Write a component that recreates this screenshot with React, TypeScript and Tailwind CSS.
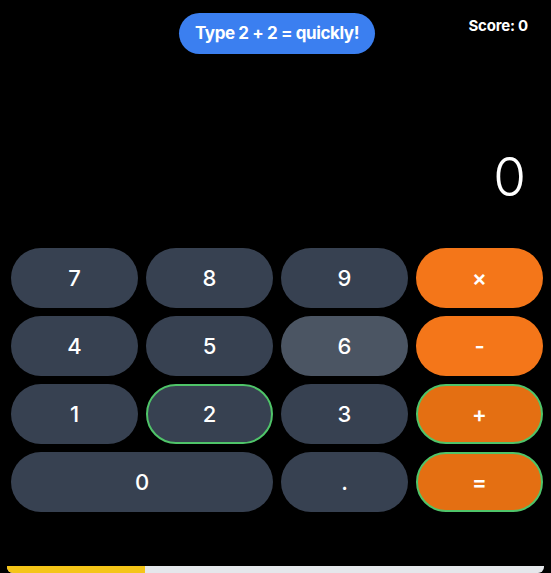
import React from "react";

type Key = { label: string; kind: "num" | "op"; span?: number; ring?: boolean; light?: boolean; dark?: boolean };

const keys: Key[] = [
  { label: "7", kind: "num" },
  { label: "8", kind: "num" },
  { label: "9", kind: "num" },
  { label: "×", kind: "op" },
  { label: "4", kind: "num" },
  { label: "5", kind: "num" },
  { label: "6", kind: "num", light: true },
  { label: "-", kind: "op" },
  { label: "1", kind: "num" },
  { label: "2", kind: "num", ring: true },
  { label: "3", kind: "num" },
  { label: "+", kind: "op", ring: true, dark: true },
  { label: "0", kind: "num", span: 2 },
  { label: ".", kind: "num" },
  { label: "=", kind: "op", ring: true, dark: true },
];

export default function App() {
  return (
    <div
      className="relative w-[551px] h-[573px] bg-black text-white overflow-hidden flex flex-col"
      style={{ fontFamily: "Inter, 'Liberation Sans', Arial, sans-serif" }}
    >
      <div className="absolute top-[15px] right-[23px] text-[15px] font-bold tracking-[-0.2px]">Score: 0</div>
      <div className="flex justify-center pt-[13px] pl-[3px]">
        <div className="h-[41px] w-[196px] rounded-full bg-[#3b7ff0] flex items-center justify-center text-[17px] font-bold tracking-[-0.4px]">
          Type 2 + 2 = quickly!
        </div>
      </div>
      <div className="flex justify-end pr-[25px] pt-[97px] h-[194px]">
        <div className="text-[53px] font-light leading-none h-[54px]">0</div>
      </div>
      <div className="grid grid-cols-4 gap-[8px] ml-[11px] w-[532px]">
        {keys.map((k) => {
          const base =
            k.kind === "op"
              ? k.dark
                ? "bg-[#e46f12]"
                : "bg-[#f47619]"
              : k.light
              ? "bg-[#4b5563]"
              : "bg-[#374151]";
          const ring = k.ring ? "border-2 border-[#4fc469]" : "";
          const span = k.span === 2 ? "col-span-2" : "";
          const font = k.kind === "op" ? "text-[22px] font-semibold" : "text-[22px] font-medium";
          return (
            <div
              key={k.label}
              className={`${base} ${ring} ${span} ${font} h-[60px] rounded-full flex items-center justify-center`}
            >
              {k.label}
            </div>
          );
        })}
      </div>
      <div className="mt-auto mx-[7px] h-[7px] bg-[#e5e7eb] rounded-b-[6px] flex overflow-hidden">
        <div className="w-[138px] h-full bg-[#f5c518]" />
      </div>
    </div>
  );
}
